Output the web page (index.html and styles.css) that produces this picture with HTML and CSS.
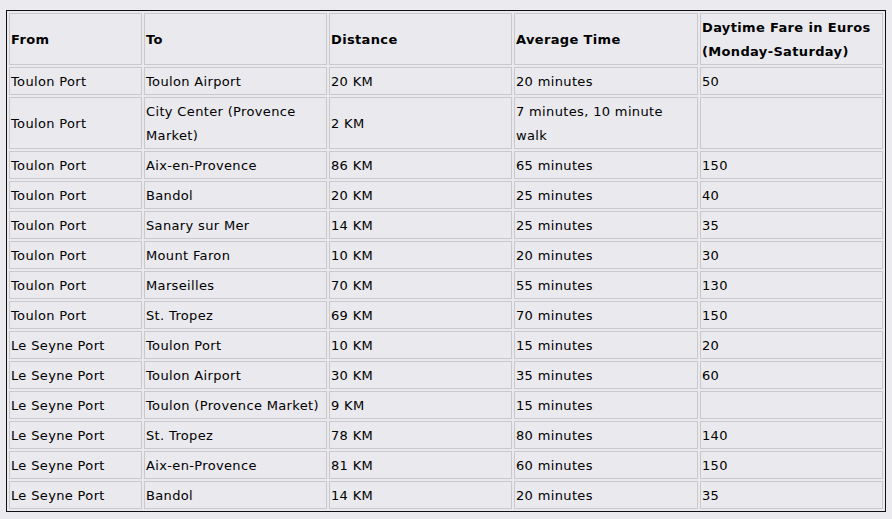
FILE: index.html
```html
<!DOCTYPE html>
<html>
<head>
<meta charset="utf-8">
<link rel="stylesheet" href="styles.css">
</head>
<body>
<table class="fares">
  <colgroup>
    <col class="c-from">
    <col class="c-to">
    <col class="c-dist">
    <col class="c-time">
    <col class="c-fare">
  </colgroup>
  <thead>
    <tr><th>From</th><th>To</th><th>Distance</th><th>Average Time</th><th>Daytime Fare in Euros (Monday-Saturday)</th></tr>
  </thead>
  <tbody>
    <tr><td>Toulon Port</td><td>Toulon Airport</td><td>20 KM</td><td>20 minutes</td><td>50</td></tr>
    <tr><td>Toulon Port</td><td>City Center (Provence Market)</td><td>2 KM</td><td>7 minutes, 10 minute walk</td><td></td></tr>
    <tr><td>Toulon Port</td><td>Aix-en-Provence</td><td>86 KM</td><td>65 minutes</td><td>150</td></tr>
    <tr><td>Toulon Port</td><td>Bandol</td><td>20 KM</td><td>25 minutes</td><td>40</td></tr>
    <tr><td>Toulon Port</td><td>Sanary sur Mer</td><td>14 KM</td><td>25 minutes</td><td>35</td></tr>
    <tr><td>Toulon Port</td><td>Mount Faron</td><td>10 KM</td><td>20 minutes</td><td>30</td></tr>
    <tr><td>Toulon Port</td><td>Marseilles</td><td>70 KM</td><td>55 minutes</td><td>130</td></tr>
    <tr><td>Toulon Port</td><td>St. Tropez</td><td>69 KM</td><td>70 minutes</td><td>150</td></tr>
    <tr><td>Le Seyne Port</td><td>Toulon Port</td><td>10 KM</td><td>15 minutes</td><td>20</td></tr>
    <tr><td>Le Seyne Port</td><td>Toulon Airport</td><td>30 KM</td><td>35 minutes</td><td>60</td></tr>
    <tr><td>Le Seyne Port</td><td>Toulon (Provence Market)</td><td>9 KM</td><td>15 minutes</td><td></td></tr>
    <tr><td>Le Seyne Port</td><td>St. Tropez</td><td>78 KM</td><td>80 minutes</td><td>140</td></tr>
    <tr><td>Le Seyne Port</td><td>Aix-en-Provence</td><td>81 KM</td><td>60 minutes</td><td>150</td></tr>
    <tr><td>Le Seyne Port</td><td>Bandol</td><td>14 KM</td><td>20 minutes</td><td>35</td></tr>
  </tbody>
</table>
</body>
</html>
```
FILE: styles.css
```css
html, body {
  background: #ebebef;
}
body {
  margin: 10px 0 0 6px;
  font-family: "DejaVu Sans", Verdana, sans-serif;
  font-size: 13px;
  letter-spacing: 0.35px;
  color: #000;
}
.fares {
  border: 1px solid #111;
  border-collapse: separate;
  border-spacing: 2px;
  table-layout: fixed;
  width: 880px;
  background: #e9e9ee;
}
.c-from { width: 133px; }
.c-to { width: 183px; }
.c-dist { width: 183px; }
.c-time { width: 184px; }
.c-fare { width: 183px; }
.fares th,
.fares td {
  border: 1px solid #c9c9cc;
  padding: 2px 1px 0 1px;
  line-height: 24px;
  text-align: left;
  vertical-align: middle;
  background: #e9e9ee;
}
.fares th {
  font-weight: bold;
}
.fares td {
  height: 24px;
}
```
